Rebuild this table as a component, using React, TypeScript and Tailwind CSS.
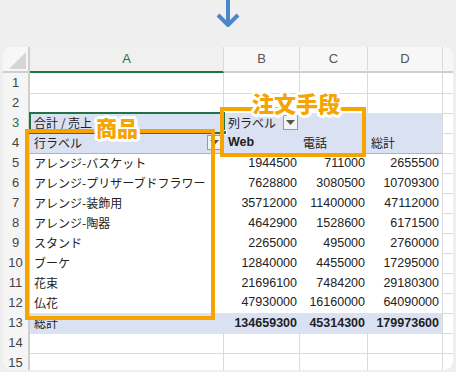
import React from "react";

const JP = "font-['Noto_Sans_CJK_JP',sans-serif]";
const NUM = "font-['Liberation_Sans',Arial,sans-serif]";
const COLS = "grid grid-cols-[27px_194px_76px_68px_75px_1fr]";
const GL = "border-[#dadada]";

const data: [string, string, string, string][] = [
  ["アレンジ-バスケット", "1944500", "711000", "2655500"],
  ["アレンジ-プリザーブドフラワー", "7628800", "3080500", "10709300"],
  ["アレンジ-装飾用", "35712000", "11400000", "47112000"],
  ["アレンジ-陶器", "4642900", "1528600", "6171500"],
  ["スタンド", "2265000", "495000", "2760000"],
  ["ブーケ", "12840000", "4455000", "17295000"],
  ["花束", "21696100", "7484200", "29180300"],
  ["仏花", "47930000", "16160000", "64090000"],
];

function RowNum({ n, active }: { n: number; active?: boolean }) {
  return (
    <div
      className={`flex items-center justify-center border-b border-r-2 border-b-[#dadada] border-r-[#cfcfcf] bg-[#f5f5f5] text-[13px] ${NUM} ${
        active ? "text-[#217346]" : "text-[#444]"
      }`}
    >
      {n}
    </div>
  );
}

function Dropdown() {
  return (
    <div className="flex h-[15px] w-[15px] items-center justify-center border border-[#9a9a9a] bg-[#f4f4f4]">
      <svg width="9" height="5" viewBox="0 0 9 5">
        <path d="M0 0 L9 0 L4.5 5 Z" fill="#555" />
      </svg>
    </div>
  );
}

function EmptyRow({ n }: { n: number }) {
  return (
    <div className={`${COLS} h-[20px]`}>
      <RowNum n={n} />
      <div className={`border-b border-r ${GL}`} />
      <div className={`border-b border-r ${GL}`} />
      <div className={`border-b border-r ${GL}`} />
      <div className={`border-b border-r ${GL}`} />
      <div className={`border-b ${GL}`} />
    </div>
  );
}

const halo =
  "[text-shadow:2px_0_0_#fff,-2px_0_0_#fff,0_2px_0_#fff,0_-2px_0_#fff,2px_2px_0_#fff,-2px_-2px_0_#fff,2px_-2px_0_#fff,-2px_2px_0_#fff,3px_0_0_#fff,-3px_0_0_#fff,0_3px_0_#fff,0_-3px_0_#fff,3px_1px_0_#fff,-3px_1px_0_#fff,1px_3px_0_#fff,1px_-3px_0_#fff]";

export default function App() {
  return (
    <div className="relative h-[372px] w-[456px] overflow-hidden bg-[#efefef]">
      <div className="flex h-[47px] justify-center">
        <svg width="24" height="27" viewBox="0 0 24 27">
          <path d="M12 0 V24" stroke="#4a86c8" strokeWidth="4" fill="none" />
          <path d="M2 15 L12 25 L22 15" stroke="#4a86c8" strokeWidth="4" fill="none" />
        </svg>
      </div>

      <div className="mx-[3px] h-[323px] overflow-hidden rounded-[9px] bg-white">
        {/* column header */}
        <div className={`${COLS} h-[26px] bg-[#f7f7f7] text-[13px] text-[#555] ${NUM}`}>
          <div className="relative border-b-2 border-r-2 border-[#cfcfcf]">
            <svg className="absolute bottom-[2px] right-[2px]" width="17" height="17" viewBox="0 0 17 17">
              <path d="M17 0 L17 17 L0 17 Z" fill="#d6d6d6" />
            </svg>
          </div>
          <div className="flex items-center justify-center border-b-2 border-r border-b-[#217346] border-r-[#dadada] bg-[#f0f0f0] text-[#217346]">
            A
          </div>
          <div className="flex items-center justify-center border-b-2 border-r border-b-[#cfcfcf] border-r-[#dadada]">B</div>
          <div className="flex items-center justify-center border-b-2 border-r border-b-[#cfcfcf] border-r-[#dadada]">C</div>
          <div className="flex items-center justify-center border-b-2 border-r border-b-[#cfcfcf] border-r-[#dadada]">D</div>
          <div className="border-b-2 border-b-[#cfcfcf]" />
        </div>

        <EmptyRow n={1} />
        <EmptyRow n={2} />

        {/* row 3 */}
        <div className={`${COLS} h-[20px] text-[12px] text-[#222] ${JP}`}>
          <RowNum n={3} active />
          <div className="flex items-center bg-[#d9e1f2] pl-[4px]">合計 / 売上</div>
          <div className="flex items-center gap-[7px] border-b border-white bg-[#d9e1f2] pl-[4px]">
            列ラベル
            <Dropdown />
          </div>
          <div className="border-b border-white bg-[#d9e1f2]" />
          <div className="border-b border-r border-b-white border-r-[#dadada] bg-[#d9e1f2]" />
          <div className={`border-b ${GL}`} />
        </div>

        {/* row 4 */}
        <div className={`${COLS} h-[20px] text-[12px] text-[#222] ${JP}`}>
          <RowNum n={4} />
          <div className="flex items-center justify-between border-b border-[#9fb4de] bg-[#d9e1f2] pl-[4px] pr-[2px]">
            行ラベル
            <Dropdown />
          </div>
          <div className={`flex items-center border-b border-[#9fb4de] bg-[#d9e1f2] pl-[4px] text-[12.5px] font-bold ${NUM}`}>
            Web
          </div>
          <div className="flex items-center border-b border-[#9fb4de] bg-[#d9e1f2] pl-[3px]">電話</div>
          <div className="flex items-center border-b border-r border-b-[#9fb4de] border-r-[#dadada] bg-[#d9e1f2] pl-[3px]">
            総計
          </div>
          <div className={`border-b ${GL}`} />
        </div>

        {data.map((r, i) => (
          <div key={i} className={`${COLS} h-[20px] text-[#222]`}>
            <RowNum n={i + 5} />
            <div
              className={`flex items-center whitespace-nowrap pl-[4px] text-[12px] ${JP} ${
                i === 7 ? "border-b border-[#a9bce2]" : ""
              }`}
            >
              {r[0]}
            </div>
            {[r[1], r[2], r[3]].map((v, j) => (
              <div
                key={j}
                className={`flex items-center justify-end pr-[3px] text-[12.5px] ${NUM} ${
                  i === 7 ? "border-b border-[#a9bce2]" : ""
                } ${j === 2 ? "border-r border-r-[#dadada]" : ""}`}
              >
                {v}
              </div>
            ))}
            <div className={`border-b ${GL}`} />
          </div>
        ))}

        {/* row 13 totals */}
        <div className={`${COLS} h-[20px] text-[#222]`}>
          <RowNum n={13} />
          <div className={`flex items-center bg-[#d9e1f2] pl-[4px] text-[12px] ${JP}`}>総計</div>
          <div className={`flex items-center justify-end bg-[#d9e1f2] pr-[3px] text-[12.5px] font-bold ${NUM}`}>134659300</div>
          <div className={`flex items-center justify-end bg-[#d9e1f2] pr-[3px] text-[12.5px] font-bold ${NUM}`}>45314300</div>
          <div className={`flex items-center justify-end border-r border-[#dadada] bg-[#d9e1f2] pr-[3px] text-[12.5px] font-bold ${NUM}`}>
            179973600
          </div>
          <div className={`border-b ${GL}`} />
        </div>

        <EmptyRow n={14} />
        <EmptyRow n={15} />
      </div>

      {/* A3 selection */}
      <div className="absolute left-[29px] top-[112px] h-[22px] w-[196px] border-2 border-[#217346]" />
      <div className="absolute left-[222px] top-[130px] h-[5px] w-[5px] border border-white bg-[#217346]" />

      {/* orange annotation boxes */}
      <div className="absolute left-[25px] top-[129px] h-[191px] w-[190px] border-4 border-[#f6a400]" />
      <div className="absolute left-[220px] top-[107px] h-[50px] w-[146px] border-4 border-[#f6a400]" />
      <div className={`absolute left-[96px] top-[117px] text-[21px] font-black leading-[20px] text-[#f6a400] ${JP} ${halo}`}>
        商品
      </div>
      <div className={`absolute left-[252px] top-[93px] text-[22px] font-black leading-[19px] text-[#f6a400] ${JP} ${halo}`}>
        注文手段
      </div>
    </div>
  );
}
